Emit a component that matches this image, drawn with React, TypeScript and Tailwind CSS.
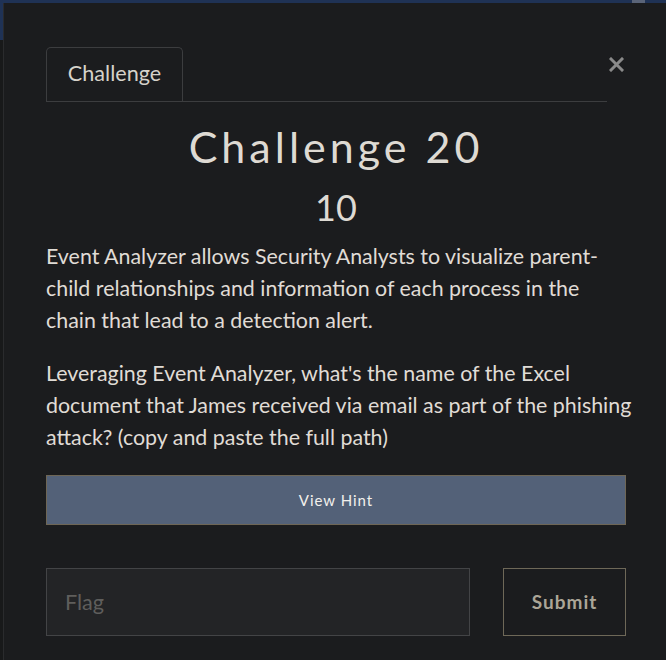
import { useState } from 'react';

const font = { fontFamily: 'Lato, "Noto Sans", sans-serif' };

export default function App() {
  const [flag, setFlag] = useState('');

  return (
    <div className="w-[666px] h-[660px] overflow-hidden bg-[#18191a] flex flex-col" style={font}>
      <div className="h-[3px] bg-[#1f3255] flex justify-end shrink-0">
        <div className="w-[13px] h-full bg-[#5a6478] mr-[21px]" />
      </div>
      <div className="flex flex-1">
        <div className="w-[3px] shrink-0">
          <div className="h-[37px] bg-[#1f3255]" />
        </div>
        <div className="flex-1 bg-[#1b1c1e] border-l border-[#2a2b2d] pl-[42px] pr-[40px] pt-[44px]">
          <div className="flex items-start">
            <div className="flex-1 flex border-b border-[#3c3d3f]">
              <div className="w-[137px] h-[54px] pb-[3px] border border-b-0 border-[#3c3d3f] rounded-t-[5px] flex items-center justify-center text-[21.6px] text-[#d6d2ca]">
                Challenge
              </div>
            </div>
            <button type="button" className="w-[19px] mt-[10px] flex justify-start pl-[2px] text-[#8a8a8a]">
              <svg width="15" height="15" viewBox="0 0 15 15">
                <path d="M2 2 L13 13 M13 2 L2 13" stroke="currentColor" strokeWidth="3" strokeLinecap="square" />
              </svg>
            </button>
          </div>

          <h2 className="mt-[21px] text-center text-[43px] leading-[48px] tracking-[4px] text-[#dedad3]">
            Challenge 20
          </h2>
          <h3 className="mt-[14px] text-center text-[36px] leading-[44px] text-[#dedad3]">10</h3>

          <p className="mt-[11px] text-[21.4px] leading-[32px] text-[#e0dcd6]">
            Event Analyzer allows Security Analysts to visualize parent-child relationships and information of each
            process in the chain that lead to a detection alert.
          </p>
          <p className="mt-[21px] -mr-[12px] text-[21.4px] leading-[32px] text-[#e0dcd6]">
            Leveraging Event Analyzer, what's the name of the Excel document that James received via email as part of
            the phishing attack? (copy and paste the full path)
          </p>

          <button
            type="button"
            className="mt-[22px] w-full h-[50px] bg-[#536178] border border-[#6e6656] text-[15px] tracking-[1px] text-[#f2f0ec]"
          >
            View Hint
          </button>

          <div className="mt-[43px] flex gap-[33px]">
            <input
              value={flag}
              onChange={(e) => setFlag(e.target.value)}
              placeholder="Flag"
              className="flex-1 h-[68px] bg-[#232426] border border-[#434446] px-[18px] text-[21.6px] text-[#ddd] placeholder:text-[#5f5e5c] outline-none"
            />
            <button
              type="button"
              className="w-[123px] h-[68px] border border-[#6e6858] text-[19px] font-bold tracking-[1px] text-[#aba597]"
            >
              Submit
            </button>
          </div>
        </div>
      </div>
    </div>
  );
}
